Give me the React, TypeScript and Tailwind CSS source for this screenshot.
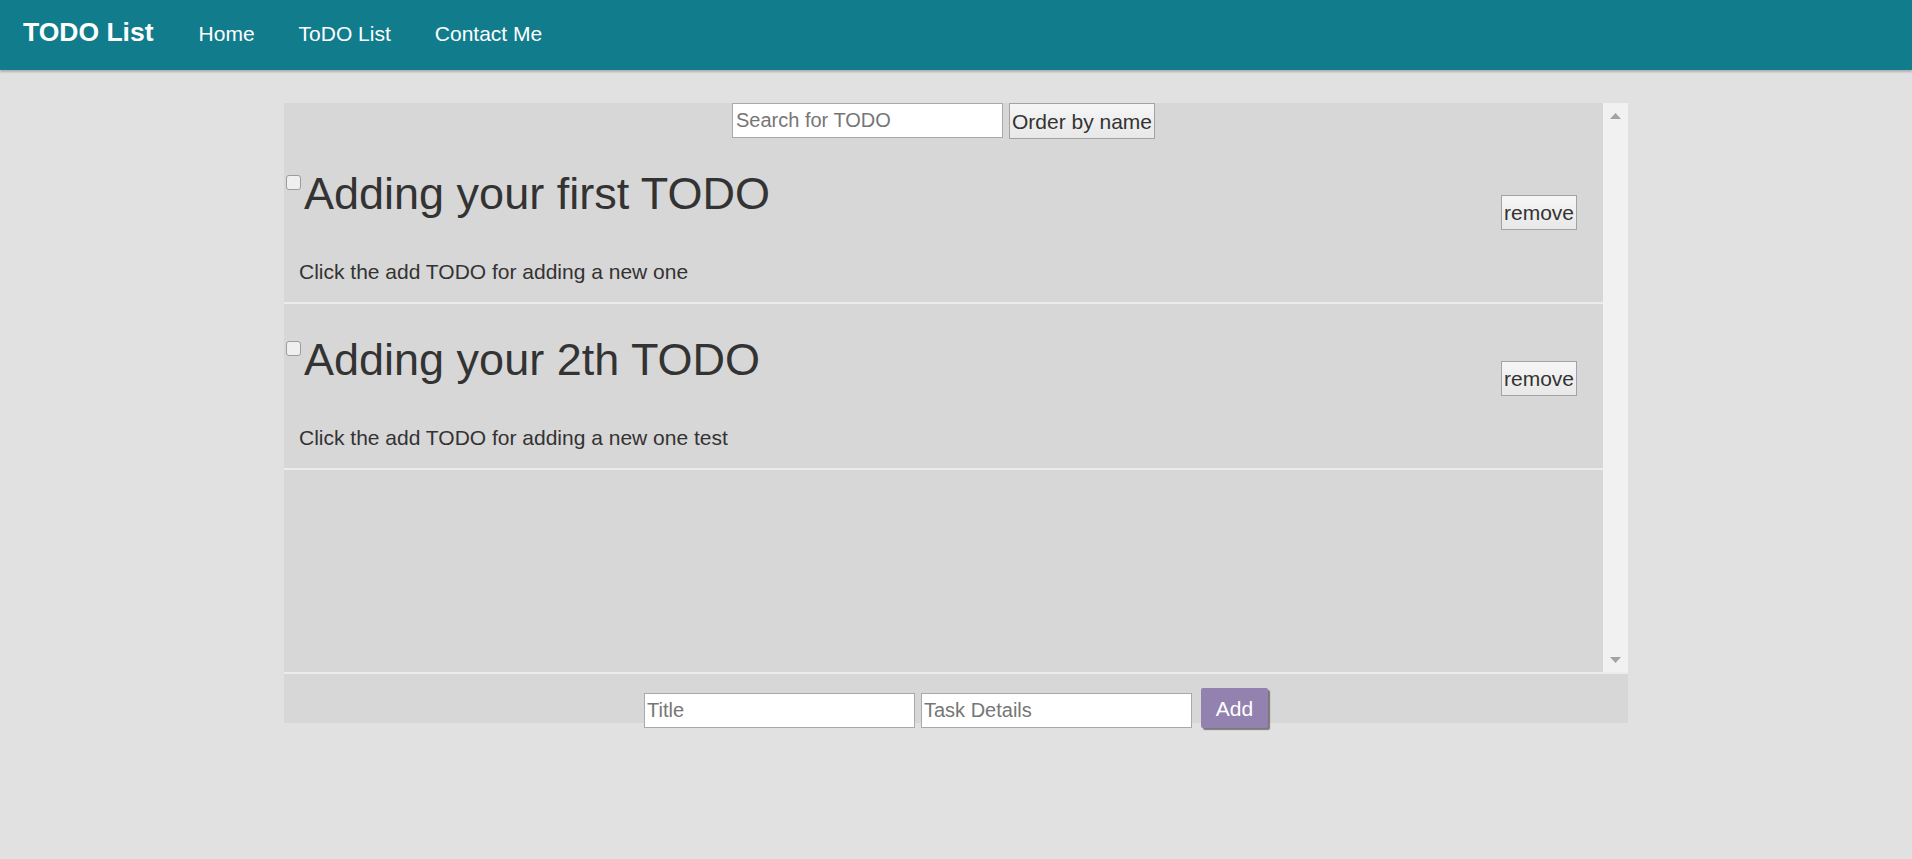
import { useState } from "react";

type Todo = { id: number; title: string; details: string; done: boolean };

const initialTodos: Todo[] = [
  {
    id: 1,
    title: "Adding your first TODO",
    details: "Click the add TODO for adding a new one",
    done: false,
  },
  {
    id: 2,
    title: "Adding your 2th TODO",
    details: "Click the add TODO for adding a new one test",
    done: false,
  },
];

const navItems = ["Home", "ToDO List", "Contact Me"];

function TodoItem({
  todo,
  onToggle,
  onRemove,
}: {
  todo: Todo;
  onToggle: () => void;
  onRemove: () => void;
}) {
  return (
    <div className="flex h-[166px] border-b-2 border-[#ececec]">
      <div className="flex flex-1 flex-col">
        <div className="flex items-start pl-[2px] pt-[33px]">
          <input
            type="checkbox"
            checked={todo.done}
            onChange={onToggle}
            className="mt-[4px] h-[15px] w-[15px] appearance-none rounded-[3px] border border-[#9c9c9c] bg-[#efefef] checked:bg-[#127c8c]"
          />
          <h1 className="ml-[3px] text-[45px] leading-none text-[#333]">
            {todo.title}
          </h1>
        </div>
        <p className="mt-[45px] pl-[15px] text-[21px] leading-none text-[#333]">
          {todo.details}
        </p>
      </div>
      <button
        onClick={onRemove}
        className="mr-[26px] mt-[57px] h-[35px] w-[76px] border border-[#a3a3a3] bg-gradient-to-b from-[#f6f6f6] to-[#e8e8e8] text-[21px] leading-none text-[#333]"
      >
        remove
      </button>
    </div>
  );
}

export default function App() {
  const [todos, setTodos] = useState<Todo[]>(initialTodos);
  const [search, setSearch] = useState("");
  const [title, setTitle] = useState("");
  const [details, setDetails] = useState("");

  const visible = todos.filter((t) =>
    t.title.toLowerCase().includes(search.toLowerCase())
  );

  const orderByName = () =>
    setTodos((list) => [...list].sort((a, b) => a.title.localeCompare(b.title)));

  const add = () => {
    if (!title.trim()) return;
    setTodos((list) => [
      ...list,
      { id: Date.now(), title, details, done: false },
    ]);
    setTitle("");
    setDetails("");
  };

  return (
    <div className="min-h-screen bg-[#e1e1e1] font-['Liberation_Sans',Arial,sans-serif]">
      {/* Navbar */}
      <header className="flex h-[70px] items-start bg-[#117c8c] pl-[23px] text-white shadow-[0_2px_2px_rgba(0,0,0,0.22)]">
        <a href="#" className="pt-[19px] text-[26.5px] font-bold leading-none">
          TODO List
        </a>
        <nav className="ml-[45px] flex gap-[44px] pt-[23px]">
          {navItems.map((item) => (
            <a key={item} href="#" className="text-[21px] leading-none">
              {item}
            </a>
          ))}
        </nav>
      </header>

      {/* Todo panel */}
      <div className="mx-auto mt-[33px] w-[1344px] bg-[#d7d7d7] text-[#333]">
        <div className="flex h-[569px]">
          <div className="flex-1 overflow-hidden">
            <div className="flex h-[35px] justify-center gap-[6px]">
              <input
                value={search}
                onChange={(e) => setSearch(e.target.value)}
                placeholder="Search for TODO"
                className="h-[35px] w-[271px] border border-[#a9a9a9] bg-white px-[3px] text-[20px] text-[#333] placeholder:text-[#767676] outline-none"
              />
              <button
                onClick={orderByName}
                className="h-[36px] w-[146px] border border-[#a3a3a3] bg-gradient-to-b from-[#f6f6f6] to-[#e8e8e8] text-[21px] leading-none text-[#333]"
              >
                Order by name
              </button>
            </div>
            {visible.map((todo) => (
              <TodoItem
                key={todo.id}
                todo={todo}
                onToggle={() =>
                  setTodos((list) =>
                    list.map((t) => (t.id === todo.id ? { ...t, done: !t.done } : t))
                  )
                }
                onRemove={() =>
                  setTodos((list) => list.filter((t) => t.id !== todo.id))
                }
              />
            ))}
          </div>

          {/* scrollbar */}
          <div className="flex w-[25px] flex-col items-center justify-between bg-[#f1f1f1] pb-[9px] pt-[10px]">
            <svg width="11" height="6" viewBox="0 0 11 6">
              <path d="M5.5 0 L11 6 L0 6 Z" fill="#a3a3a3" />
            </svg>
            <svg width="11" height="6" viewBox="0 0 11 6">
              <path d="M0 0 L11 0 L5.5 6 Z" fill="#a3a3a3" />
            </svg>
          </div>
        </div>

        {/* Add form */}
        <div className="flex h-[51px] items-start justify-center gap-[6px] border-t-2 border-[#ececec] pt-[14px]">
          <input
            value={title}
            onChange={(e) => setTitle(e.target.value)}
            placeholder="Title"
            className="mt-[5px] h-[35px] w-[271px] border border-[#a9a9a9] bg-white px-[2px] text-[20px] text-[#333] placeholder:text-[#767676] outline-none"
          />
          <input
            value={details}
            onChange={(e) => setDetails(e.target.value)}
            placeholder="Task Details"
            className="mt-[5px] h-[35px] w-[271px] border border-[#a9a9a9] bg-white px-[2px] text-[20px] text-[#333] placeholder:text-[#767676] outline-none"
          />
          <button
            onClick={add}
            className="ml-[3px] h-[40px] w-[67px] rounded-[2px] bg-[#9381b0] text-[21px] leading-none text-white shadow-[2px_2px_1px_rgba(80,80,80,0.7)]"
          >
            Add
          </button>
        </div>
      </div>
    </div>
  );
}
